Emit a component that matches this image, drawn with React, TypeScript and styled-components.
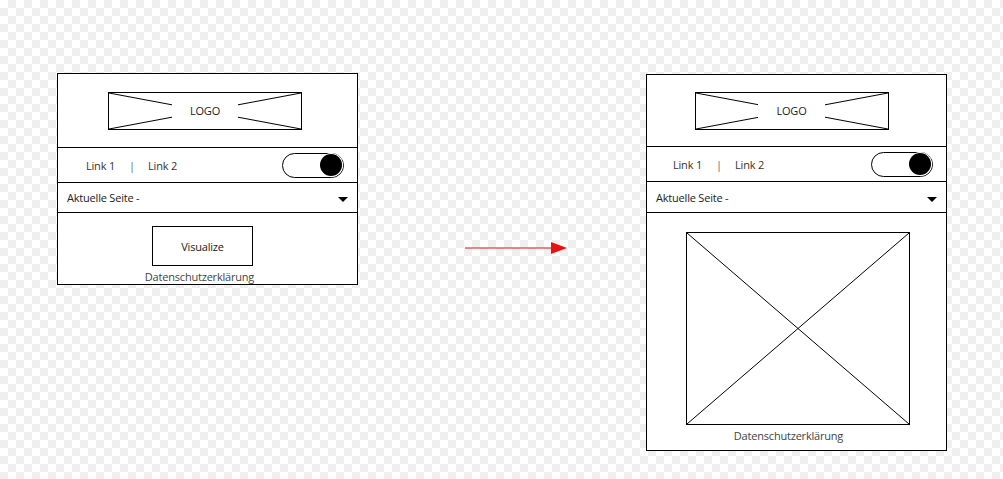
import styled, { createGlobalStyle } from 'styled-components';

const GlobalStyle = createGlobalStyle`
	html, body {
		margin: 0;
		padding: 0;
	}
	html {
		background-color: #ffffff;
		background-image:
			linear-gradient(45deg, #efefef 25%, transparent 25%, transparent 75%, #efefef 75%),
			linear-gradient(45deg, #efefef 25%, transparent 25%, transparent 75%, #efefef 75%);
		background-size: 16px 16px;
		background-position: 0 0, 8px 8px;
	}
	body {
		width: 1003px;
		height: 479px;
		overflow: hidden;
		font-family: 'Open Sans', 'Noto Sans', sans-serif;
		background: transparent;
	}
`;

const Canvas = styled.div`
	display: flex;
	align-items: flex-start;
	padding: 73px 0 0 57px;
`;

const Frame = styled.div<{ $offset?: number }>`
	width: 299px;
	margin-top: ${(p) => p.$offset || 0}px;
	border: 1px solid #000;
	background: #fff;
	display: flex;
	flex-direction: column;
`;

const Header = styled.div<{ $height: number }>`
	height: ${(p) => p.$height}px;
	border-bottom: 1px solid #000;
	display: flex;
	align-items: center;
	justify-content: center;
`;

const LogoBox = styled.div<{ $shift: number }>`
	position: relative;
	width: 192px;
	height: 36px;
	border: 1px solid #000;
	display: flex;
	align-items: center;
	justify-content: center;
	margin-left: ${(p) => p.$shift}px;
`;

const Cross = styled.svg`
	position: absolute;
	inset: 0;
	width: 100%;
	height: 100%;
`;

const LogoLabel = styled.span`
	position: relative;
	background: #fff;
	padding: 2px 18px;
	font-size: 11px;
	letter-spacing: -0.2px;
	color: #222;
`;

const Nav = styled.div<{ $left: number }>`
	height: 34px;
	border-bottom: 1px solid #000;
	display: flex;
	align-items: center;
	padding: 0 13px 0 ${(p) => p.$left}px;
`;

const NavLink = styled.span`
	font-size: 11px;
	letter-spacing: -0.2px;
	color: #333;
`;

const Separator = styled.span`
	font-size: 11px;
	color: #666;
	margin: 0 13px 0 14px;
`;

const Toggle = styled.div`
	margin-left: auto;
	width: 58px;
	height: 23px;
	border: 1px solid #000;
	border-radius: 13px;
	display: flex;
	align-items: center;
	justify-content: flex-end;
	padding: 0 1px;
`;

const Knob = styled.div`
	width: 22px;
	height: 22px;
	border-radius: 50%;
	background: #000;
	box-shadow: 0 0 0 1px #fff;
`;

const Dropdown = styled.div<{ $height: number }>`
	height: ${(p) => p.$height}px;
	border-bottom: 1px solid #000;
	display: flex;
	align-items: center;
	justify-content: space-between;
	padding: 0 9px;
	font-size: 11px;
	letter-spacing: -0.2px;
	color: #222;
`;

const Caret = styled.div`
	width: 0;
	height: 0;
	border-left: 5px solid transparent;
	border-right: 5px solid transparent;
	border-top: 5px solid #000;
	margin-top: 4px;
`;

const Content = styled.div<{ $height: number; $top: number }>`
	height: ${(p) => p.$height}px;
	box-sizing: border-box;
	padding-top: ${(p) => p.$top}px;
	display: flex;
	flex-direction: column;
	align-items: center;
`;

const Button = styled.div`
	width: 99px;
	height: 38px;
	border: 1px solid #000;
	display: flex;
	align-items: center;
	justify-content: center;
	font-size: 11px;
	letter-spacing: -0.2px;
	color: #222;
	margin-right: 10px;
`;

const ImageBox = styled.div`
	position: relative;
	width: 222px;
	height: 191px;
	border: 1px solid #000;
	margin-left: 3px;
`;

const Footer = styled.div`
	font-size: 11px;
	letter-spacing: -0.2px;
	line-height: 14px;
	color: #444;
	margin-top: 4px;
	margin-right: 16px;
`;

const ArrowWrap = styled.div`
	margin: 168px 0 0 107px;
	width: 181px;
	height: 14px;
	line-height: 0;
`;

function XLines() {
	return (
		<Cross viewBox="0 0 100 100" preserveAspectRatio="none">
			<line x1="0" y1="0" x2="100" y2="100" stroke="#000" strokeWidth={1} vectorEffect="non-scaling-stroke" />
			<line x1="100" y1="0" x2="0" y2="100" stroke="#000" strokeWidth={1} vectorEffect="non-scaling-stroke" />
		</Cross>
	);
}

function Screen({
	headerHeight,
	logoShift,
	navLeft,
	dropHeight,
	contentHeight,
	contentTop,
	offset,
	children,
}: {
	headerHeight: number;
	logoShift: number;
	navLeft: number;
	dropHeight: number;
	contentHeight: number;
	contentTop: number;
	offset?: number;
	children: React.ReactNode;
}) {
	return (
		<Frame $offset={offset}>
			<Header $height={headerHeight}>
				<LogoBox $shift={logoShift}>
					<XLines />
					<LogoLabel>LOGO</LogoLabel>
				</LogoBox>
			</Header>
			<Nav $left={navLeft}>
				<NavLink>Link 1</NavLink>
				<Separator>|</Separator>
				<NavLink>Link 2</NavLink>
				<Toggle>
					<Knob />
				</Toggle>
			</Nav>
			<Dropdown $height={dropHeight}>
				<span>Aktuelle Seite -</span>
				<Caret />
			</Dropdown>
			<Content $height={contentHeight} $top={contentTop}>
				{children}
				<Footer>Datenschutzerklärung</Footer>
			</Content>
		</Frame>
	);
}

export default function App() {
	return (
		<>
			<GlobalStyle />
			<Canvas>
				<Screen headerHeight={73} logoShift={-5} navLeft={28} dropHeight={29} contentHeight={71} contentTop={13}>
					<Button>Visualize</Button>
				</Screen>
				<ArrowWrap>
					<svg width="104" height="14" viewBox="0 0 104 14">
						<line x1="0" y1="7" x2="88" y2="7" stroke="#e01010" strokeWidth="1.2" />
						<polygon points="86,1 102,7 86,13" fill="#e81010" />
					</svg>
				</ArrowWrap>
				<Screen headerHeight={71} logoShift={-10} navLeft={26} dropHeight={30} contentHeight={237} contentTop={19} offset={1}>
					<ImageBox>
						<XLines />
					</ImageBox>
				</Screen>
			</Canvas>
		</>
	);
}
